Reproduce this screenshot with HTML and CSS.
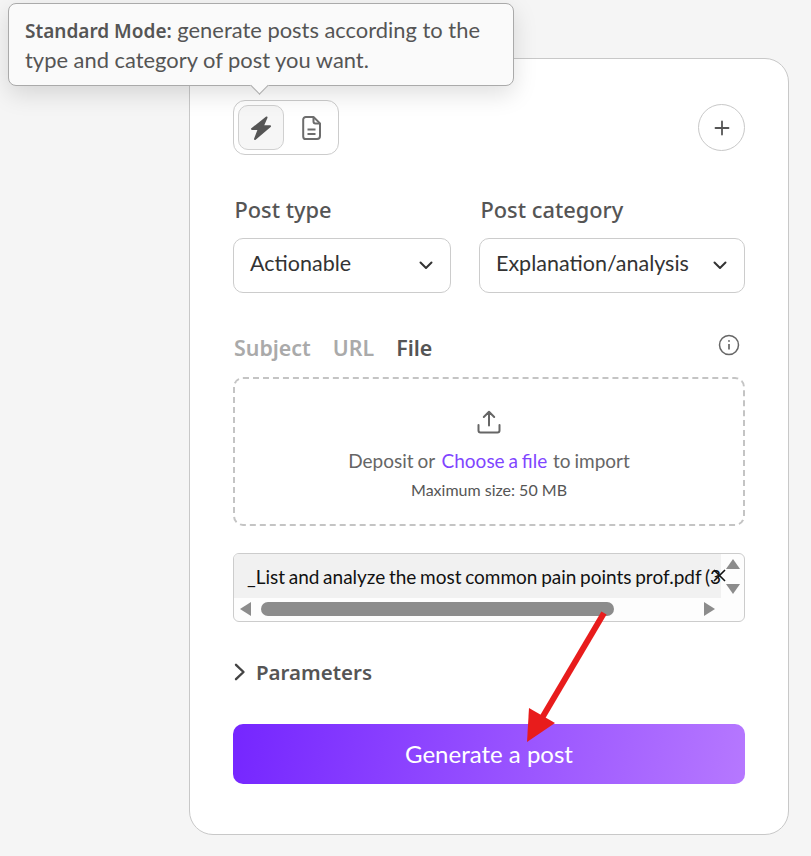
FILE: index.html
```html
<!DOCTYPE html>
<html lang="en">
<head>
<meta charset="utf-8">
<title>Generate a post</title>
<link rel="stylesheet" href="styles.css">
</head>
<body>
<main class="card">
  <div class="top-row">
    <div class="mode-toggle">
      <button class="mode-btn active" aria-label="Standard mode">
        <svg width="24" height="26" viewBox="0 0 24 26"><path d="M17.500 2.500 3 14h6.800L6 24l15-12.800h-7.200Z" fill="#555" stroke="#555" stroke-width="2" stroke-linejoin="round"/></svg>
      </button>
      <button class="mode-btn doc-btn" aria-label="Document mode">
        <svg width="20" height="26" viewBox="0 0 20 26" fill="none" stroke="#6d6d6d" stroke-width="2"><path d="M3.800 2h7.700L18 8.400V21a3 3 0 0 1-3 3H3.800a2.600 2.600 0 0 1-2.600-2.600V4.600A2.600 2.600 0 0 1 3.800 2Z" stroke-linejoin="round"/><path d="M11.500 2v4.500a2 2 0 0 0 2 2H18M5.500 14.500h8M5.500 19h8"/></svg>
      </button>
    </div>
    <button class="add-btn" aria-label="Add">
      <svg width="16" height="16" viewBox="0 0 16 16" stroke="#555" stroke-width="1.800" stroke-linecap="round"><path d="M8 1.500v13M1.500 8h13"/></svg>
    </button>
  </div>

  <div class="fields">
    <div class="field field-type">
      <label class="field-label">Post type</label>
      <div class="select">
        <span>Actionable</span>
        <svg width="14" height="9" viewBox="0 0 14 9" fill="none" stroke="#333" stroke-width="2" stroke-linecap="round" stroke-linejoin="round"><path d="m1.500 1.500 5.500 5.500 5.500-5.500"/></svg>
      </div>
    </div>
    <div class="field field-category">
      <label class="field-label">Post category</label>
      <div class="select">
        <span>Explanation/analysis</span>
        <svg width="14" height="9" viewBox="0 0 14 9" fill="none" stroke="#333" stroke-width="2" stroke-linecap="round" stroke-linejoin="round"><path d="m1.500 1.500 5.500 5.500 5.500-5.500"/></svg>
      </div>
    </div>
  </div>

  <div class="tabs-row">
    <div class="tabs">
      <span class="tab">Subject</span>
      <span class="tab">URL</span>
      <span class="tab tab-active">File</span>
    </div>
    <svg class="info" width="22" height="22" viewBox="0 0 22 22" fill="none" stroke="#666" stroke-width="1.500"><circle cx="11" cy="11" r="9.500"/><path d="M11 10v5.500" stroke-width="1.700"/><circle cx="11" cy="7" r=".9" fill="#666" stroke="none"/></svg>
  </div>

  <div class="dropzone">
    <svg width="24" height="24" viewBox="0 0 24 24" fill="none" stroke="#666" stroke-width="2" stroke-linecap="round" stroke-linejoin="round"><path d="M12 15.500V2M6.800 7 12 1.800 17.200 7M1.500 15v5.500a2 2 0 0 0 2 2h17a2 2 0 0 0 2-2V15"/></svg>
    <p class="drop-text">Deposit or <a class="drop-link">Choose a file</a> to import</p>
    <p class="drop-note">Maximum size: 50 MB</p>
  </div>

  <div class="filebox">
    <div class="file-main">
      <div class="file-name">_List and analyze the most common pain points prof.pdf (3)</div>
      <div class="hscroll">
        <span class="tri tri-left"></span>
        <span class="hthumb"></span>
        <span class="tri tri-right"></span>
      </div>
    </div>
    <div class="vscroll">
      <span class="tri tri-up"></span>
      <span class="tri tri-down"></span>
    </div>
    <svg class="file-x" width="13" height="13" viewBox="0 0 13 13" stroke="#111" stroke-width="1.600"><path d="m1 1 11 11M12 1 1 12"/></svg>
  </div>

  <div class="params">
    <svg width="12" height="18" viewBox="0 0 12 18" fill="none" stroke="#444" stroke-width="2.400" stroke-linecap="round" stroke-linejoin="round"><path d="m2 1.800 7.500 7.200-7.500 7.200"/></svg>
    <span>Parameters</span>
  </div>

  <button class="generate">Generate a post</button>
</main>

<div class="tooltip">
  <strong>Standard Mode:</strong> generate posts according to the type and category of post you want.
  <span class="tooltip-tip"></span>
</div>

<svg class="annotation" width="811" height="856" viewBox="0 0 811 856">
  <path d="M604 613 542 718" stroke="#e81c1c" stroke-width="6" fill="none"/>
  <path d="M529 708 555 723 527 742Z" fill="#e81c1c"/>
</svg>
</body>
</html>
```
FILE: styles.css
```css
* { box-sizing: border-box; }
html, body { margin: 0; height: 856px; overflow: hidden; }
body {
  position: relative;
  background: #f5f5f5;
  font-family: Lato, "Liberation Sans", sans-serif;
  color: #555;
  padding: 58px 22px 0 189px;
}
button { font-family: inherit; border: 0; padding: 0; }
p { margin: 0; }

.card {
  width: 600px;
  height: 777px;
  background: #fff;
  border: 1px solid #c8c8c8;
  border-radius: 24px;
  padding: 41px 43px 0;
}
.top-row { display: flex; justify-content: space-between; align-items: center; height: 55px; }
.mode-toggle {
  display: flex;
  gap: 4px;
  width: 106px;
  height: 55px;
  padding: 4px;
  border: 1px solid #ccc;
  border-radius: 12px;
}
.mode-btn {
  width: 46px;
  height: 45px;
  background: none;
  border: 1px solid transparent;
  border-radius: 10px;
  display: flex;
  align-items: center;
  justify-content: center;
}
.mode-btn.active { background: #f6f6f6; border-color: #d0d0d0; }
.doc-btn { padding-left: 2px; }
.add-btn {
  width: 47px;
  height: 47px;
  border: 1px solid #c8c8c8;
  border-radius: 50%;
  background: #fff;
  display: flex;
  align-items: center;
  justify-content: center;
}

.fields { display: flex; gap: 28px; margin-top: 41px; }
.field-type { width: 218px; }
.field-category { width: 266px; }
.field-label {
  display: block;
  font-family: "Noto Sans", sans-serif;
  font-size: 21.800px;
  font-weight: 500;
  line-height: 28px;
  color: #555;
  padding-left: 1.500px;
  margin-bottom: 14px;
}
.select {
  height: 55px;
  border: 1px solid #ccc;
  border-radius: 10px;
  padding: 0 17px 5px 16px;
  display: flex;
  align-items: center;
  justify-content: space-between;
  font-size: 21.500px;
  color: #333;
}
.select svg { margin-top: 5px; }

.tabs-row { display: flex; justify-content: space-between; align-items: flex-start; margin-top: 39px; height: 45px; padding: 0 5px 0 1px; }
.tabs { display: flex; gap: 22px; font-family: "Noto Sans", sans-serif; font-size: 21.400px; font-weight: 600; line-height: 32px; color: #aaa; }
.tab-active { color: #555; }
.info { margin-top: 2px; }

.dropzone {
  height: 149px;
  border: 2px dashed #c4c4c4;
  border-radius: 10px;
  display: flex;
  flex-direction: column;
  align-items: center;
  padding-top: 31px;
}
.drop-text { font-size: 19px; line-height: 26px; margin-top: 14px; color: #666; word-spacing: -1px; }
.drop-link { color: #7f45ff; margin: 0 2px 0 3px; }
.drop-note { font-size: 16px; line-height: 20px; margin-top: 6px; color: #555; }

.filebox {
  position: relative;
  display: flex;
  height: 69px;
  margin-top: 27px;
  border: 1px solid #ccc;
  border-radius: 6px;
  background: #fdfdfd;
  overflow: hidden;
}
.file-main { width: 487px; }
.file-name {
  height: 44px;
  background: #f1f1f1;
  color: #111;
  font-size: 19px;
  line-height: 46px;
  word-spacing: -1.200px;
  padding-left: 13px;
  white-space: nowrap;
  overflow: hidden;
}
.hscroll { position: relative; height: 23px; }
.hthumb { position: absolute; left: 27px; top: 4px; width: 353px; height: 14px; border-radius: 7px; background: #8c8c8c; }
.tri { position: absolute; width: 0; height: 0; border-style: solid; border-color: transparent; }
.tri-left { left: 6px; top: 4px; border-width: 7px 11px 7px 0; border-right-color: #8c8c8c; }
.tri-right { left: 470px; top: 4px; border-width: 7px 0 7px 11px; border-left-color: #8c8c8c; }
.vscroll { position: relative; flex: 1; }
.tri-up { left: 5px; top: 5px; border-width: 0 7px 10px; border-bottom-color: #8c8c8c; }
.tri-down { left: 5px; top: 30px; border-width: 10px 7px 0; border-top-color: #8c8c8c; }
.file-x { position: absolute; left: 479px; top: 15px; }

.params {
  display: flex;
  align-items: center;
  gap: 10px;
  margin-top: 34px;
  height: 32px;
  font-family: "Noto Sans", sans-serif;
  font-size: 20.500px;
  font-weight: 600;
  color: #555;
}
.params svg { margin-left: 1px; }
.generate {
  display: block;
  width: 100%;
  height: 60px;
  margin-top: 36px;
  padding-bottom: 2px;
  border-radius: 10px;
  background: linear-gradient(100deg, #7526ff 0%, #b678ff 100%);
  color: #fff;
  font-size: 24px;
}

.tooltip {
  position: absolute;
  left: 8px;
  top: 3px;
  width: 506px;
  height: 83px;
  padding: 11px 16px;
  background: #fafafa;
  border: 1px solid #aaa;
  border-radius: 8px;
  box-shadow: 0 8px 24px rgba(0, 0, 0, .13);
  font-size: 21.900px;
  line-height: 30px;
  color: #555;
}
.tooltip strong { font-family: "Noto Sans", sans-serif; font-size: 19px; font-weight: 600; line-height: 1; }
.tooltip-tip {
  position: absolute;
  left: 244px;
  bottom: -7px;
  width: 13px;
  height: 13px;
  background: #fafafa;
  border-right: 1px solid #aaa;
  border-bottom: 1px solid #aaa;
  transform: rotate(45deg);
}
.annotation { position: absolute; left: 0; top: 0; pointer-events: none; }
```
